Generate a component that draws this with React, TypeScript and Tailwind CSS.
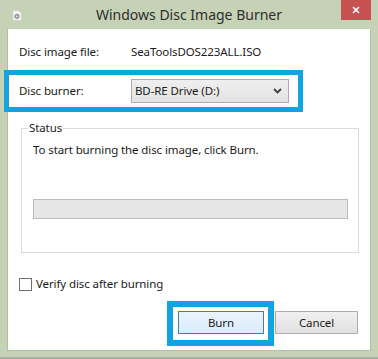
import React from 'react'

const font = { fontFamily: '"Noto Sans", "Open Sans", Arial, sans-serif' }

function DiscIcon() {
  return (
    <svg width="10" height="11" viewBox="0 0 10 11">
      <path d="M1 0.5h5.5l3 3v7h-8.5z" fill="#f4f4f2" stroke="#d4d4cf" />
      <circle cx="5" cy="6.3" r="2.6" fill="#9a9a9a" />
      <circle cx="5" cy="6.3" r="0.9" fill="#e6e6e6" />
    </svg>
  )
}

function Chevron() {
  return (
    <svg width="9" height="6" viewBox="0 0 9 6">
      <path d="M1 1l3.5 3.5L8 1" fill="none" stroke="#404040" strokeWidth="1.8" />
    </svg>
  )
}

export default function App() {
  return (
    <div
      className="relative w-[378px] h-[359px] bg-[#c6d2b5] flex flex-col overflow-hidden text-[11.5px] tracking-[-0.1px] text-[#1a1a1a]"
      style={font}
    >
      {/* title bar */}
      <div className="h-[29px] flex items-start relative shrink-0">
        <div className="pl-[12px] pt-[10px]">
          <DiscIcon />
        </div>
        <div className="absolute left-0 right-0 top-[4px] text-center text-[14px] tracking-normal text-[#2e2e2e]">
          Windows Disc Image Burner
        </div>
        <button className="absolute right-[7px] top-0 w-[30px] h-[20px] bg-[#c75050] flex items-center justify-center">
          <svg width="8" height="8" viewBox="0 0 8 8">
            <path d="M1 1l6 6M7 1l-6 6" stroke="#fff" strokeWidth="1.6" />
          </svg>
        </button>
      </div>

      {/* client area */}
      <div className="mx-[7px] h-[322px] bg-white border border-[#b1bea3] border-t-0 flex flex-col pl-[11px]">
        <div className="flex items-center h-[20px] mt-[13px]">
          <span className="w-[112px]">Disc image file:</span>
          <span>SeaToolsDOS223ALL.ISO</span>
        </div>

        <div className="flex items-center h-[24px] mt-[17px]">
          <span className="w-[112px]">Disc burner:</span>
          <div className="w-[158px] h-[24px] border border-[#acacac] bg-gradient-to-b from-[#efefef] to-[#e3e3e3] flex items-center justify-between pl-[3px] pr-[6px]">
            <span>BD-RE Drive (D:)</span>
            <Chevron />
          </div>
        </div>

        <fieldset className="mt-[17px] ml-[2px] w-[338px] h-[133px] border border-[#dcdcdc]">
          <legend className="ml-[6px] px-[1px] leading-[16px]">Status</legend>
          <div className="pl-[11px] pt-[6px] leading-[16px]">To start burning the disc image, click Burn.</div>
          <div className="ml-[11px] mt-[41px] w-[315px] h-[20px] bg-[#e6e6e6] border border-[#bcbcbc]" />
        </fieldset>

        <label className="flex items-center mt-[24px] h-[14px]">
          <span className="w-[13px] h-[13px] border border-[#707070] bg-white" />
          <span className="ml-[4px]">Verify disc after burning</span>
        </label>

        <div className="flex justify-end gap-[11px] mt-[20px] pr-[12px]">
          <button className="w-[86px] h-[23px] border border-[#3c7fb1] bg-gradient-to-b from-[#eaf4fc] to-[#dcecfc]">
            Burn
          </button>
          <button className="w-[83px] h-[23px] border border-[#adadad] bg-gradient-to-b from-[#f0f0f0] to-[#e1e1e1]">
            Cancel
          </button>
        </div>
      </div>

      <div className="absolute left-0 right-0 bottom-0 h-[2px] bg-[#a7ad9f]" />

      {/* annotation highlights */}
      <div className="absolute left-[4px] top-[70px] w-[299px] h-[42px] border-[5px] border-[#12a3e0]" />
      <div className="absolute left-[167px] top-[301px] w-[107px] h-[45px] border-[6px] border-[#12a3e0]" />
    </div>
  )
}
